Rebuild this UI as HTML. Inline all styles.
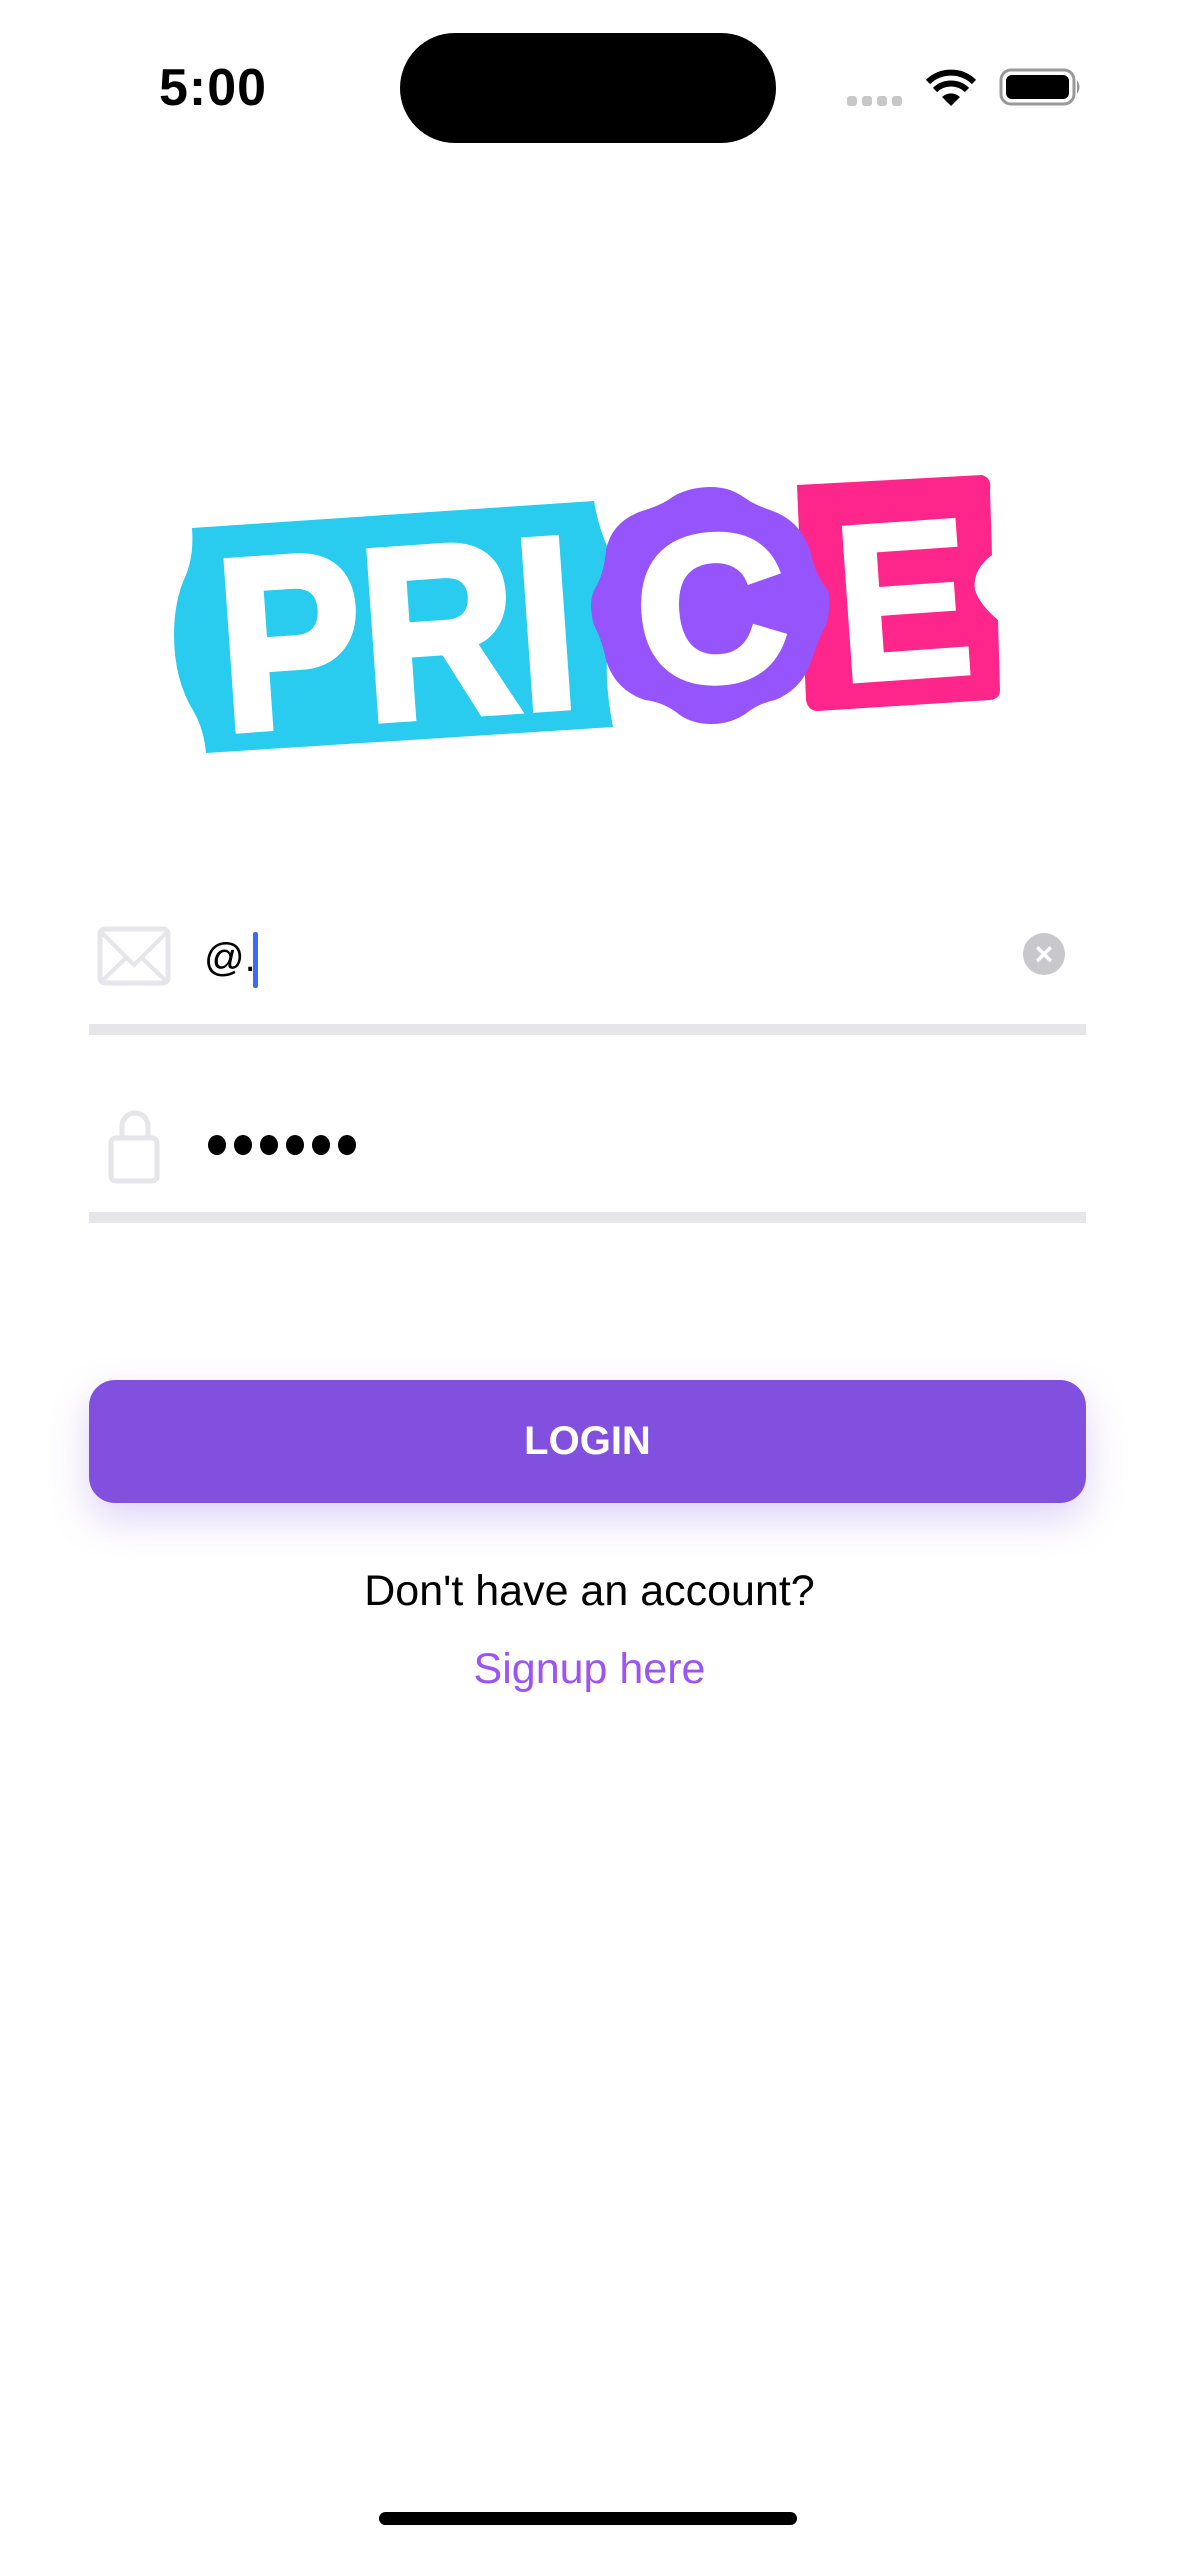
<!DOCTYPE html>
<html><head><meta charset="utf-8"><style>
html,body{margin:0;padding:0;background:#fff;}
body{width:1179px;height:2556px;position:relative;overflow:hidden;font-family:"Liberation Sans",sans-serif;}
.abs{position:absolute;}
</style></head><body>
<div class="abs" style="left:159px;top:58px;font-size:52px;font-weight:bold;letter-spacing:1px;">5:00</div>
<div class="abs" style="left:400px;top:33px;width:376px;height:110px;border-radius:55px;background:#000;"></div>
<svg class="abs" style="left:840px;top:60px" width="250" height="60" viewBox="840 60 250 60">
<g fill="#c8c8c8"><rect x="847" y="96" width="10" height="10" rx="3"/><rect x="862" y="96" width="10" height="10" rx="3"/><rect x="877" y="96" width="10" height="10" rx="3"/><rect x="892" y="96" width="10" height="10" rx="3"/></g>
<path d="M951 106 L942 97 A13 13 0 0 1 960 97 Z" fill="#000"/>
<path d="M935 90 A23 23 0 0 1 967 90" stroke="#000" stroke-width="6" fill="none"/>
<path d="M928 82 A33 33 0 0 1 974 82" stroke="#000" stroke-width="6" fill="none"/>
<rect x="1001" y="70" width="73" height="34" rx="10" fill="none" stroke="#999" stroke-width="3"/>
<rect x="1006" y="75" width="63" height="24" rx="6" fill="#000"/>
<path d="M1077 80 Q1082 87 1077 94 Z" fill="#999"/>
</svg>
<svg class="abs" style="left:0;top:0" width="1179" height="800" viewBox="0 0 1179 800">
<path d="M192 528 L594 501 Q600 535 612 556 Q618 575 612 600 L608 650 Q604 680 613 727 L206 753 Q204 730 194 712 Q174 680 174 635 Q174 600 186 575 Q194 555 192 528 Z" fill="#29cbef"/>
<g transform="rotate(-4 400 630)"><text x="218" y="718" font-family="Liberation Sans" font-weight="bold" font-size="244" fill="#fff" stroke="#fff" stroke-width="8" transform="scale(0.88 1)" transform-origin="218 718">PRI</text></g>
<path d="M797 485 L982 475 Q992 478 990 490 L992 555 Q972 570 975 590 Q980 605 998 620 L1000 690 Q1000 699 990 700 L818 711 Q808 711 806 700 Z" fill="#ff268b"/>
<path d="M711 487 Q730 487 745 498 Q755 505 770 510 Q800 520 810 550 Q815 575 828 590 Q832 605 826 625 Q818 640 810 665 Q800 690 775 700 Q760 703 748 712 Q732 724 711 724 Q690 724 676 712 Q662 702 645 700 Q615 690 606 660 Q602 640 594 625 Q588 605 594 590 Q604 575 606 550 Q612 520 645 510 Q662 505 674 496 Q690 487 711 487 Z" fill="#9654fc"/>
<g transform="rotate(-4 711 605)"><text x="711" y="680" text-anchor="middle" font-family="Liberation Sans" font-weight="bold" font-size="206" fill="#fff" stroke="#fff" stroke-width="8">C</text></g>
<g transform="rotate(-4 900 595)"><text x="835" y="678" font-family="Liberation Sans" font-weight="bold" font-size="224" fill="#fff" stroke="#fff" stroke-width="4" transform="scale(0.91 1)" transform-origin="835 678">E</text></g>
</svg>
<svg class="abs" style="left:96px;top:925px" width="80" height="62" viewBox="0 0 80 62">
<rect x="4" y="4" width="68" height="54" rx="5" fill="none" stroke="#e5e5ea" stroke-width="5"/>
<path d="M6 8 L38 40 L70 8 M6 56 L30 33 M70 56 L46 33" stroke="#e5e5ea" stroke-width="4" fill="none"/>
</svg>
<div class="abs" style="left:204px;top:936px;font-size:40px;color:#000;">@.</div>
<div class="abs" style="left:253px;top:932px;width:5px;height:56px;background:#3c6cf5;border-radius:2px;"></div>
<div class="abs" style="left:1023px;top:933px;width:42px;height:42px;border-radius:50%;background:#c7c7cc;color:#fff;font-size:32px;line-height:42px;text-align:center;font-weight:bold;">×</div>
<div class="abs" style="left:89px;top:1024px;width:997px;height:11px;background:#e5e5ea;"></div>
<svg class="abs" style="left:106px;top:1106px" width="60" height="80" viewBox="0 0 60 80">
<path d="M16 32 L16 20 A13 13 0 0 1 42 20 L42 32" fill="none" stroke="#e5e5ea" stroke-width="5"/>
<rect x="5" y="32" width="46" height="43" rx="5" fill="none" stroke="#e5e5ea" stroke-width="5"/>
</svg>
<div class="abs" style="left:206px;top:1132px;">
<svg width="160" height="26"><g fill="#000"><ellipse cx="11" cy="13" rx="9" ry="10"/><ellipse cx="37" cy="13" rx="9" ry="10"/><ellipse cx="63" cy="13" rx="9" ry="10"/><ellipse cx="89" cy="13" rx="9" ry="10"/><ellipse cx="115" cy="13" rx="9" ry="10"/><ellipse cx="141" cy="13" rx="9" ry="10"/></g></svg></div>
<div class="abs" style="left:89px;top:1212px;width:997px;height:11px;background:#e5e5ea;"></div>
<div class="abs" style="left:89px;top:1380px;width:997px;height:123px;border-radius:26px;background:#8250df;box-shadow:0 16px 40px rgba(130,80,223,0.25);color:#fff;font-weight:bold;font-size:40px;line-height:123px;text-align:center;">LOGIN</div>
<div class="abs" style="left:0;width:1179px;top:1567px;text-align:center;font-size:43px;color:#000;">Don't have an account?</div>
<div class="abs" style="left:0;width:1179px;top:1645px;text-align:center;font-size:43px;color:#9b55f5;">Signup here</div>
<div class="abs" style="left:379px;top:2512px;width:418px;height:13px;border-radius:7px;background:#000;"></div>
</body></html>
